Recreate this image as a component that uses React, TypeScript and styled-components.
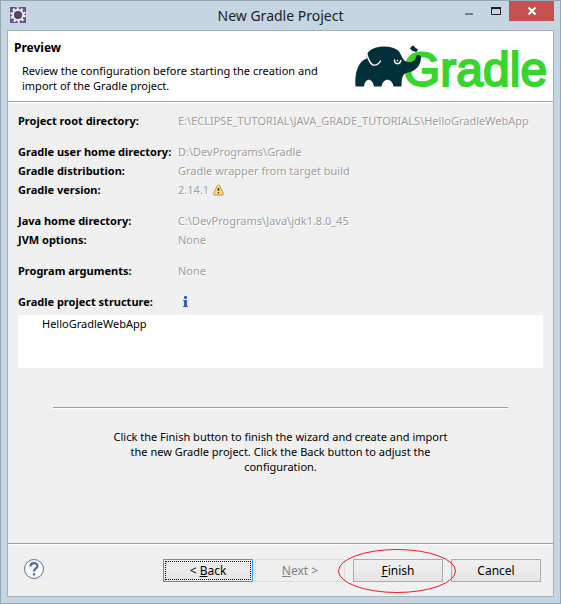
import React from 'react';
import styled, { createGlobalStyle } from 'styled-components';

const GlobalStyle = createGlobalStyle`
  *, *::before, *::after { box-sizing: border-box; }
  body { margin: 0; }
`;

const Window = styled.div`
  display: flex;
  flex-direction: column;
  min-height: 100vh;
  padding: 0 6px 6px;
  background: #c5d5e2;
  border: 1px solid #98a6b2;
  color: #000;
  font: 11px/15px 'Noto Sans', 'Open Sans', sans-serif;
`;

const TitleBar = styled.header`
  display: grid;
  grid-template-columns: 1fr auto 1fr;
  height: 29px;
`;

const AppIcon = styled.svg`
  width: 16px;
  height: 16px;
  margin: 6px 0 0 3px;
`;

const WindowTitle = styled.h1`
  margin: 5px 0 0;
  font-size: 14px;
  font-weight: 400;
  line-height: 20px;
  color: #1e2226;
`;

const WindowControls = styled.div`
  display: flex;
  justify-content: flex-end;
`;

const ControlButton = styled.button<{ $close?: boolean }>`
  display: flex;
  align-items: center;
  justify-content: center;
  width: ${(p) => (p.$close ? 45 : 27)}px;
  height: 20px;
  padding: 0;
  border: 0;
  background: ${(p) => (p.$close ? '#c75050' : 'transparent')};
`;

const Client = styled.main`
  display: flex;
  flex-direction: column;
  flex: 1;
  border: 1px solid #a3b1bd;
  background: #f0f0f0;
`;

const Banner = styled.section`
  display: flex;
  justify-content: space-between;
  height: 71px;
  padding: 8px 4px 0 6px;
  background: #fff;
  border-bottom: 1px solid #a0a0a0;
  box-shadow: 0 1px #fff;
`;

const BannerTitle = styled.h2`
  margin: 0;
  font-size: 12px;
  line-height: 18px;
`;

const BannerText = styled.p`
  max-width: 320px;
  margin: 6px 0 0 8px;
`;

const Logo = styled.svg`
  flex: none;
  width: 196px;
  height: 54px;
  margin-top: 2px;
`;

const Body = styled.section`
  display: flex;
  flex-direction: column;
  flex: 1;
  padding: 9px 10px 0;
`;

const Group = styled.dl`
  display: grid;
  grid-template-columns: 156px minmax(0, 1fr);
  grid-auto-rows: 19px;
  align-items: center;
  column-gap: 4px;
  margin: 0 0 12px;
`;

const Label = styled.dt`
  font-weight: 700;
  white-space: nowrap;
`;

const Value = styled.dd`
  display: flex;
  align-items: center;
  gap: 4px;
  margin: 0;
  overflow: hidden;
  color: #a0a0a0;
  text-shadow: 1px 1px #fff;
  white-space: nowrap;
`;

const StructureHeading = styled.div`
  display: flex;
  align-items: center;
  height: 19px;
`;

const StructureTitle = styled.h3`
  width: 160px;
  margin: 0;
  font-size: 11px;
  line-height: 15px;
`;

const InfoGlyph = styled.svg`
  width: 16px;
  height: 14px;
`;

const ProjectTree = styled.ul`
  min-height: 53px;
  margin: 4px 0 0;
  padding: 1px 24px;
  background: #fff;
  list-style: none;
`;

const Divider = styled.hr`
  width: calc(100% - 70px);
  height: 2px;
  margin: 39px auto 0;
  border: 0;
  border-top: 1px solid #a0a0a0;
  background: #fff;
`;

const Hint = styled.p`
  max-width: 352px;
  margin: 20px auto 0;
  text-align: center;
`;

const Footer = styled.footer`
  display: flex;
  align-items: center;
  height: 53px;
  padding: 1px 12px 0 15px;
  border-top: 1px solid #a0a0a0;
  box-shadow: inset 0 1px #fff;
`;

const HelpButton = styled.button`
  display: flex;
  margin: 0 auto 3px 0;
  padding: 0;
  border: 0;
  background: none;
`;

const Actions = styled.div`
  display: flex;
  gap: 8px;
`;

const Pair = styled.div`
  display: flex;
  gap: 2px;
`;

const WizardButton = styled.button<{ $focused?: boolean }>`
  width: 90px;
  height: 23px;
  padding: 0;
  border: 1px solid ${(p) => (p.$focused ? '#3399ff' : '#acacac')};
  outline: ${(p) => (p.$focused ? '1px dotted #000' : 'none')};
  outline-offset: -3px;
  background: linear-gradient(#f0f0f0, #e5e5e5);
  color: #000;
  font: 12px/15px 'Noto Sans', 'Open Sans', sans-serif;

  &:disabled {
    border-color: #dcdcdc;
    background: #efefef;
    color: #838383;
  }
`;

const Highlighted = styled.div`
  position: relative;
  display: flex;
`;

const Ring = styled.svg`
  position: absolute;
  top: -11px;
  left: -16px;
  width: 120px;
  height: 46px;
  pointer-events: none;
`;

const groups: { label: string; value: string; warning?: boolean }[][] = [
  [{ label: 'Project root directory:', value: 'E:\\ECLIPSE_TUTORIAL\\JAVA_GRADE_TUTORIALS\\HelloGradleWebApp' }],
  [
    { label: 'Gradle user home directory:', value: 'D:\\DevPrograms\\Gradle' },
    { label: 'Gradle distribution:', value: 'Gradle wrapper from target build' },
    { label: 'Gradle version:', value: '2.14.1', warning: true },
  ],
  [
    { label: 'Java home directory:', value: 'C:\\DevPrograms\\Java\\jdk1.8.0_45' },
    { label: 'JVM options:', value: 'None' },
  ],
  [{ label: 'Program arguments:', value: 'None' }],
];

function GradleLogo() {
  return (
    <Logo viewBox="353 41 196 54" role="img" aria-label="Gradle">
      <text x="403" y="86" fontFamily="'Liberation Sans', sans-serif" fontSize="48" fill="#37d62c" stroke="#37d62c" strokeWidth="2">
        Gradle
      </text>
      <path
        fill="#02303a"
        d="M355.500 86.500C354.500 73 358 61 367 58.500C365 53 371 49 376 47.500C383 45.500 393 46 398 50.500C401.500 53.500 401.500 59 406 61.500C411 64 416 60 416.500 55.500C418 54 421 55 421 57.500C421 65 416 71.500 407 72.800C402 73.500 401.500 80 401.500 86.500H393.500C392 77.500 383 77.500 381.500 86.500H374C372.500 77.500 365 77.500 364 86.500Z"
      />
      <path fill="#02303a" d="M410 48.500Q411 46 413.500 45.500Q415 48 418 49.500L416.500 52Q412 51.500 410 48.500Z" />
      <path fill="none" stroke="#fff" strokeWidth="1.400" strokeLinecap="round" d="M366.500 53Q369 63 373 65Q377.500 66 380.500 61" />
      <path fill="none" stroke="#fff" strokeWidth="1.500" strokeLinecap="round" d="M394.500 60Q394.500 63.500 397.500 63.700Q400.500 63.500 400.800 60.500" />
      <circle cx="397.500" cy="60.500" r=".8" fill="#fff" />
    </Logo>
  );
}

function EclipseIcon() {
  return (
    <AppIcon viewBox="0 0 16 16" aria-hidden="true">
      <rect width="16" height="16" fill="#67508f" />
      <circle cx="8" cy="8" r="6.500" fill="none" stroke="#f4f1ec" strokeWidth="2.600" strokeDasharray="2.200 1.880" />
      <circle cx="8" cy="8" r="5" fill="#493a68" stroke="#efebe4" strokeWidth="2" />
      <path d="M4.500 7H11.500M4.500 9H11.500" stroke="#66567c" />
    </AppIcon>
  );
}

function WarningIcon() {
  return (
    <svg width="11" height="12" viewBox="0 0 11 12" role="img" aria-label="Warning">
      <path d="M5.500 1.200Q6.500 1.200 7 2.500L10.300 9.500Q10.600 11 9.500 11H1.500Q.4 11 .7 9.500L4 2.500Q4.500 1.200 5.500 1.200Z" fill="#ffe08a" stroke="#c98a28" />
      <path d="M5.500 4V7M5.500 8V9.500" stroke="#4a3410" strokeWidth="1.500" />
    </svg>
  );
}

function InfoIcon() {
  return (
    <InfoGlyph viewBox="0 0 16 14" role="img" aria-label="Information">
      <rect x="6" y="1" width="3" height="3" rx="1" fill="#2d5dbb" />
      <path d="M5 5H9V11H10V12H5V11H6V6H5Z" fill="#3f5fa8" />
    </InfoGlyph>
  );
}

export default function App() {
  return (
    <>
      <GlobalStyle />
      <Window>
        <TitleBar>
          <EclipseIcon />
          <WindowTitle>New Gradle Project</WindowTitle>
          <WindowControls>
            <ControlButton aria-label="Minimize">
              <svg width="10" height="10" viewBox="0 0 10 10"><path d="M1 8H9" stroke="#777d83" strokeWidth="2" /></svg>
            </ControlButton>
            <ControlButton aria-label="Maximize">
              <svg width="10" height="8" viewBox="0 0 10 8"><path d="M.5 1V7.500H9.500V1" fill="none" stroke="#1d1d1d" /><path d="M0 1H10" stroke="#1d1d1d" strokeWidth="2" /></svg>
            </ControlButton>
            <ControlButton $close aria-label="Close">
              <svg width="8" height="8" viewBox="0 0 8 8"><path d="M.5 .5L7.500 7.500M7.500 .5L.5 7.500" stroke="#fff" strokeWidth="2" /></svg>
            </ControlButton>
          </WindowControls>
        </TitleBar>
        <Client>
          <Banner>
            <div>
              <BannerTitle>Preview</BannerTitle>
              <BannerText>Review the configuration before starting the creation and import of the Gradle project.</BannerText>
            </div>
            <GradleLogo />
          </Banner>
          <Body>
            {groups.map((rows) => (
              <Group key={rows[0].label}>
                {rows.map((row) => (
                  <React.Fragment key={row.label}>
                    <Label>{row.label}</Label>
                    <Value>
                      {row.value}
                      {row.warning && <WarningIcon />}
                    </Value>
                  </React.Fragment>
                ))}
              </Group>
            ))}
            <StructureHeading>
              <StructureTitle>Gradle project structure:</StructureTitle>
              <InfoIcon />
            </StructureHeading>
            <ProjectTree>
              <li>HelloGradleWebApp</li>
            </ProjectTree>
            <Divider />
            <Hint>
              Click the Finish button to finish the wizard and create and import the new Gradle project. Click the Back
              button to adjust the configuration.
            </Hint>
          </Body>
          <Footer>
            <HelpButton aria-label="Help">
              <svg width="22" height="22" viewBox="0 0 22 22">
                <circle cx="11" cy="11" r="9.500" fill="#f7f9fb" stroke="#62718f" />
                <path d="M7.500 8.500C7.500 4 14.500 4 14.500 8C14.500 10.500 11 10.500 11 13.500M11 15.200V17.500" fill="none" stroke="#5a6b8c" strokeWidth="2.200" />
              </svg>
            </HelpButton>
            <Actions>
              <Pair>
                <WizardButton $focused>&lt; <u>B</u>ack</WizardButton>
                <WizardButton disabled><u>N</u>ext &gt;</WizardButton>
              </Pair>
              <Highlighted>
                <WizardButton><u>F</u>inish</WizardButton>
                <Ring viewBox="0 0 120 46" aria-hidden="true">
                  <ellipse cx="60" cy="23" rx="58.500" ry="21.500" fill="none" stroke="#ed1c24" />
                </Ring>
              </Highlighted>
              <WizardButton>Cancel</WizardButton>
            </Actions>
          </Footer>
        </Client>
      </Window>
    </>
  );
}
